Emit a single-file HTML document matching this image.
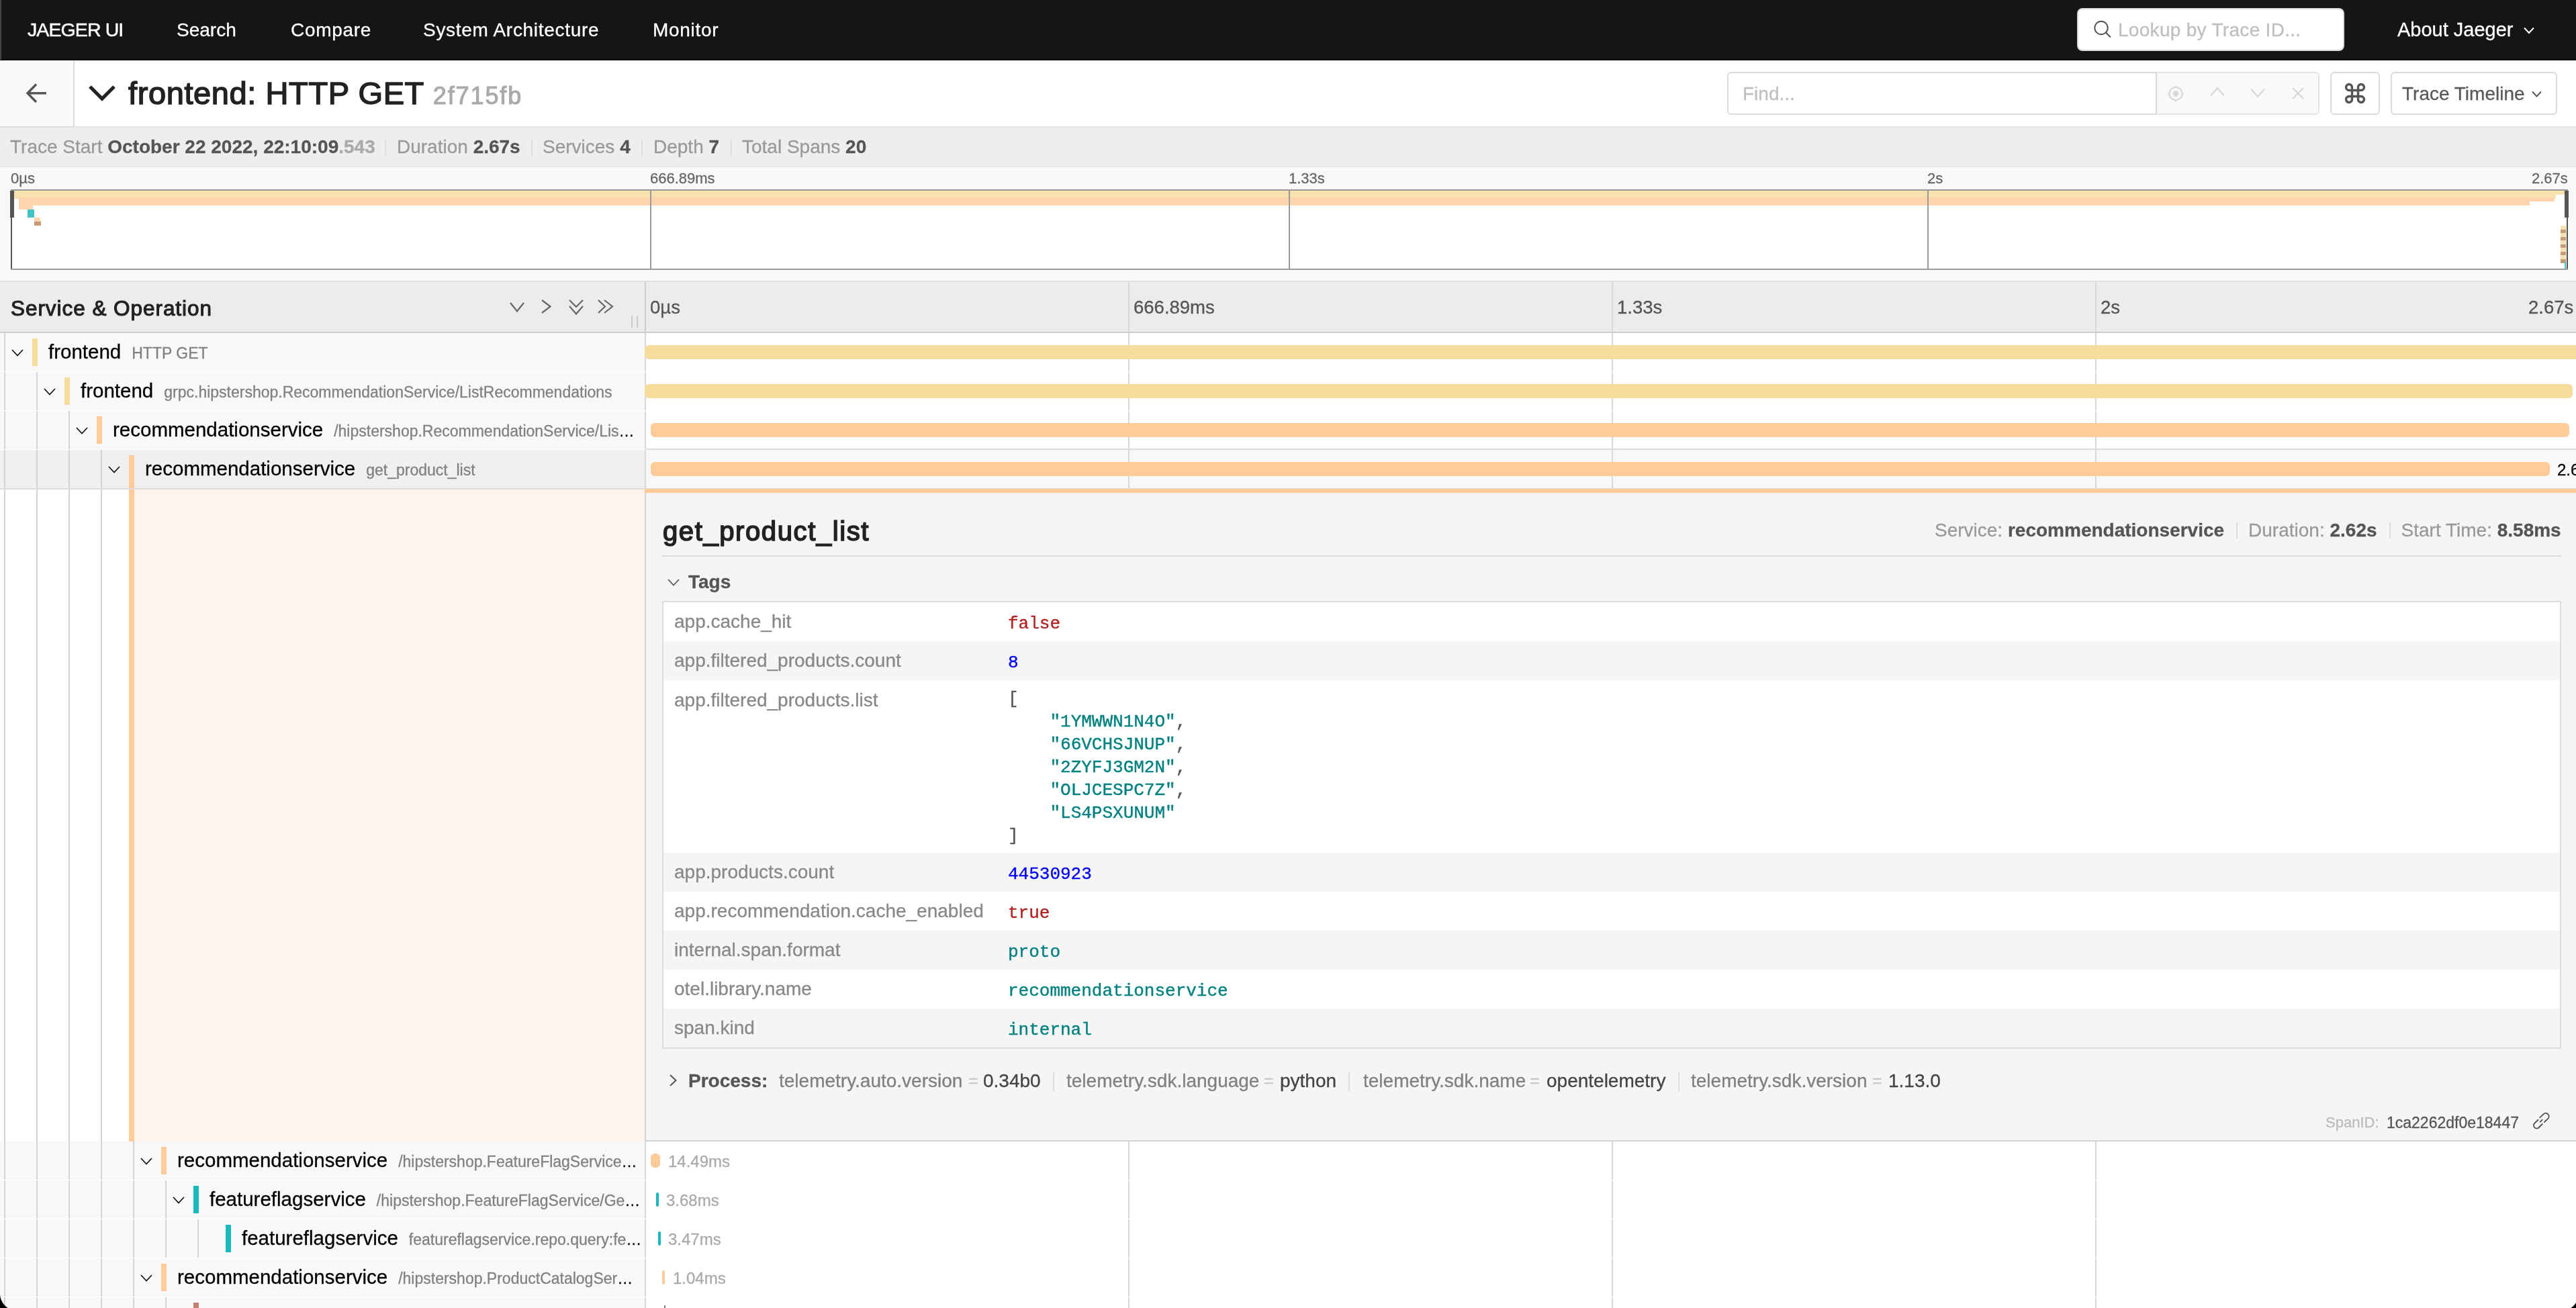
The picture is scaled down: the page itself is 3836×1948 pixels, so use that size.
<!DOCTYPE html>
<html><head><meta charset="utf-8">
<style>
*{box-sizing:border-box}
html,body{margin:0;padding:0;overflow:hidden}
body{width:3840px;height:1948px;position:relative;overflow:hidden;background:#fff;font-family:"Liberation Sans",sans-serif;color:#000}
.a{position:absolute;line-height:1;white-space:nowrap;will-change:transform;-webkit-text-stroke-width:0.3px}
.mono{font-family:"Liberation Mono",monospace}
svg{position:absolute;overflow:visible}
</style></head>
<body>
<div class="a" style="left:0px;top:0px;width:3840px;height:90px;background:#151515;"></div>
<div class="a" style="left:0px;top:88px;width:3840px;height:1px;background:#080808;"></div>
<div class="a" style="left:0px;top:0px;width:2px;height:89px;background:#454545;"></div>
<div class="a" style="left:41px;top:30.3px;font-size:28.5px;color:#fff;font-weight:400;letter-spacing:-0.9px;-webkit-text-stroke:0.5px #fff">JAEGER UI</div>
<div class="a" style="left:263px;top:30.7px;font-size:28px;color:#fff;font-weight:400;-webkit-text-stroke:0.3px #fff">Search</div>
<div class="a" style="left:433px;top:30.7px;font-size:28px;color:#fff;font-weight:400;letter-spacing:0.7px;-webkit-text-stroke:0.3px #fff">Compare</div>
<div class="a" style="left:630px;top:30.7px;font-size:28px;color:#fff;font-weight:400;letter-spacing:0.7px;-webkit-text-stroke:0.3px #fff">System Architecture</div>
<div class="a" style="left:972px;top:30.7px;font-size:28px;color:#fff;font-weight:400;letter-spacing:0.7px;-webkit-text-stroke:0.3px #fff">Monitor</div>
<div class="a" style="left:3093px;top:12px;width:398px;height:64px;background:#fff;border:2px solid #d9d9d9;border-radius:8px"></div>
<svg style="left:3118px;top:31px" width="26" height="26" viewBox="0 0 26 26"><circle cx="11" cy="10.5" r="9.7" fill="none" stroke="#555" stroke-width="2"/><line x1="17.9" y1="17.4" x2="24.2" y2="23.8" stroke="#555" stroke-width="2.2" stroke-linecap="round"/></svg>
<div class="a" style="left:3154px;top:30.5px;font-size:28px;color:#bfbfbf;font-weight:400;letter-spacing:0.3px">Lookup by Trace ID...</div>
<div class="a" style="left:3570px;top:29.7px;font-size:29px;color:#fff;font-weight:400;">About Jaeger</div>
<svg style="left:3758px;top:40px" width="16" height="11" viewBox="0 0 16 11"><polyline points="1,1.5 8,9 15,1.5" fill="none" stroke="#fff" stroke-width="2"/></svg>
<div class="a" style="left:0px;top:90px;width:3840px;height:98px;background:#fff;"></div>
<div class="a" style="left:0px;top:188px;width:3840px;height:2px;background:#e6e6e6;"></div>
<div class="a" style="left:0px;top:90px;width:109px;height:98px;background:#fafafa;"></div>
<div class="a" style="left:109px;top:90px;width:2px;height:100px;background:#ddd;"></div>
<div class="a" style="left:0px;top:188px;width:111px;height:2px;background:#ddd;"></div>
<svg style="left:39px;top:124px" width="32" height="30" viewBox="0 0 32 30"><polyline points="15,1.5 2,14.8 15,28" fill="none" stroke="#555" stroke-width="3.4"/><line x1="2.5" y1="14.8" x2="30" y2="14.8" stroke="#555" stroke-width="3.4"/></svg>
<svg style="left:132px;top:127px" width="40" height="26" viewBox="0 0 40 26"><polyline points="2,2 20,20 38,2" fill="none" stroke="#222" stroke-width="5.2"/></svg>
<div class="a" style="left:191px;top:114.5px;font-size:47px;color:#222;font-weight:400;letter-spacing:0.6px;-webkit-text-stroke:1.5px #222">frontend: HTTP GET <span style="font-size:36px;color:#aaa;letter-spacing:1.9px;-webkit-text-stroke:1.1px #aaa">2f715fb</span></div>
<div class="a" style="left:2572px;top:107px;width:640px;height:64px;background:#fff;border:2px solid #d9d9d9;border-radius:6px 0 0 6px"></div>
<div class="a" style="left:2595px;top:126.3px;font-size:28px;color:#bfbfbf;font-weight:400;">Find...</div>
<div class="a" style="left:3210px;top:107px;width:244px;height:64px;background:#f9f9f9;border:2px solid #e4e4e4;border-left-color:#d9d9d9;border-radius:0 6px 6px 0"></div>
<svg style="left:3228px;top:127px" width="25" height="25" viewBox="0 0 25 25"><circle cx="12" cy="12.5" r="9.6" fill="none" stroke="#d6d6d6" stroke-width="2"/><circle cx="12" cy="12.5" r="4.2" fill="#d6d6d6"/><line x1="12" y1="0.5" x2="12" y2="3" stroke="#d6d6d6" stroke-width="2"/><line x1="12" y1="22" x2="12" y2="24.5" stroke="#d6d6d6" stroke-width="2"/><line x1="0" y1="12.5" x2="2.5" y2="12.5" stroke="#d6d6d6" stroke-width="2"/><line x1="21.5" y1="12.5" x2="24" y2="12.5" stroke="#d6d6d6" stroke-width="2"/></svg>
<svg style="left:3291px;top:129px" width="22" height="15" viewBox="0 0 22 15"><polyline points="1,13.5 11,2 21,13.5" fill="none" stroke="#d6d6d6" stroke-width="2"/></svg>
<svg style="left:3351px;top:131px" width="22" height="15" viewBox="0 0 22 15"><polyline points="1,1.5 11,13 21,1.5" fill="none" stroke="#d6d6d6" stroke-width="2"/></svg>
<svg style="left:3413px;top:130px" width="18" height="18" viewBox="0 0 18 18"><line x1="1" y1="1" x2="17" y2="17" stroke="#d6d6d6" stroke-width="2"/><line x1="17" y1="1" x2="1" y2="17" stroke="#d6d6d6" stroke-width="2"/></svg>
<div class="a" style="left:3470px;top:107px;width:74px;height:64px;background:#fff;border:2px solid #d9d9d9;border-radius:6px"></div>
<svg style="left:3492px;top:124px" width="30" height="30" viewBox="0 0 30 30"><path d="M10.5 10.5 V6.5 A4.5 4.5 0 1 0 6 10.5 H24 A4.5 4.5 0 1 0 19.5 6.5 V23.5 A4.5 4.5 0 1 0 24 19.5 H6 A4.5 4.5 0 1 0 10.5 23.5 Z" fill="none" stroke="#555" stroke-width="3.4"/></svg>
<div class="a" style="left:3560px;top:107px;width:248px;height:64px;background:#fff;border:2px solid #d9d9d9;border-radius:6px"></div>
<div class="a" style="left:3577px;top:125.8px;font-size:28px;color:#595959;font-weight:400;">Trace Timeline</div>
<svg style="left:3770px;top:135px" width="15" height="10" viewBox="0 0 15 10"><polyline points="1,1.5 7.5,8.5 14,1.5" fill="none" stroke="#595959" stroke-width="1.9"/></svg>
<div class="a" style="left:0px;top:190px;width:3840px;height:58px;background:#eee;"></div>
<div class="a" style="left:0px;top:248px;width:3840px;height:1px;background:#e4e4e4;"></div>
<div class="a" style="left:15px;top:205.4px;font-size:28px;color:#000;font-weight:400;"><span style="color:#999">Trace Start </span><span style="color:#555;font-weight:700">October 22 2022, 22:10:09</span><span style="color:#aaa;font-weight:700">.543</span></div>
<div class="a" style="left:591px;top:205.4px;font-size:28px;color:#000;font-weight:400;"><span style="color:#999">Duration </span><span style="color:#555;font-weight:700">2.67s</span></div>
<div class="a" style="left:808px;top:205.4px;font-size:28px;color:#000;font-weight:400;"><span style="color:#999">Services </span><span style="color:#555;font-weight:700">4</span></div>
<div class="a" style="left:973px;top:205.4px;font-size:28px;color:#000;font-weight:400;"><span style="color:#999">Depth </span><span style="color:#555;font-weight:700">7</span></div>
<div class="a" style="left:1105px;top:205.4px;font-size:28px;color:#000;font-weight:400;"><span style="color:#999">Total Spans </span><span style="color:#555;font-weight:700">20</span></div>
<div class="a" style="left:573px;top:208px;width:2px;height:24px;background:#ddd;"></div>
<div class="a" style="left:791px;top:208px;width:2px;height:24px;background:#ddd;"></div>
<div class="a" style="left:955px;top:208px;width:2px;height:24px;background:#ddd;"></div>
<div class="a" style="left:1088px;top:208px;width:2px;height:24px;background:#ddd;"></div>
<div class="a" style="left:0px;top:249px;width:3840px;height:169px;background:#f8f8f8;"></div>
<div class="a" style="left:0px;top:418px;width:3840px;height:2px;background:#e0e0e0;"></div>
<div class="a" style="left:16px;top:282px;width:3808px;height:120px;background:#fff;border:2px solid #999"></div>
<div class="a" style="left:16px;top:255.4px;font-size:22px;color:#666;font-weight:400;">0µs</div>
<div class="a" style="left:968px;top:255.4px;font-size:22px;color:#666;font-weight:400;">666.89ms</div>
<div class="a" style="left:1919px;top:255.4px;font-size:22px;color:#666;font-weight:400;">1.33s</div>
<div class="a" style="left:2870px;top:255.4px;font-size:22px;color:#666;font-weight:400;">2s</div>
<div class="a" style="right:16px;top:255.4px;font-size:22px;color:#666;font-weight:400;">2.67s</div>
<div class="a" style="left:18px;top:284px;width:3801px;height:6px;background:#f8e2b0;"></div>
<div class="a" style="left:18px;top:290px;width:3788px;height:6px;background:#f8e2b0;"></div>
<div class="a" style="left:28px;top:294px;width:3776px;height:6px;background:#ffd5ad;"></div>
<div class="a" style="left:28px;top:300px;width:3739px;height:6px;background:#ffd5ad;"></div>
<div class="a" style="left:28px;top:306px;width:21px;height:6px;background:#ffd5ad;"></div>
<div class="a" style="left:41px;top:312px;width:10px;height:6px;background:#41c3c8;"></div>
<div class="a" style="left:41px;top:318px;width:10px;height:6px;background:#41c3c8;"></div>
<div class="a" style="left:51px;top:324px;width:9px;height:6px;background:#ffd5ad;"></div>
<div class="a" style="left:51px;top:330px;width:10px;height:6px;background:#c69a76;"></div>
<div class="a" style="left:3813px;top:336.0px;width:8px;height:5.5px;background:#f8e2b0;"></div>
<div class="a" style="left:3813px;top:341.5px;width:8px;height:5.5px;background:#c69a76;"></div>
<div class="a" style="left:3813px;top:347.0px;width:8px;height:5.5px;background:#f8e2b0;"></div>
<div class="a" style="left:3813px;top:352.5px;width:8px;height:5.5px;background:#c69a76;"></div>
<div class="a" style="left:3813px;top:358.0px;width:8px;height:5.5px;background:#f8e2b0;"></div>
<div class="a" style="left:3813px;top:363.5px;width:8px;height:5.5px;background:#c69a76;"></div>
<div class="a" style="left:3813px;top:369.0px;width:8px;height:5.5px;background:#f8e2b0;"></div>
<div class="a" style="left:3813px;top:374.5px;width:8px;height:5.5px;background:#c69a76;"></div>
<div class="a" style="left:3813px;top:380.0px;width:8px;height:5.5px;background:#f8e2b0;"></div>
<div class="a" style="left:3813px;top:385.5px;width:8px;height:5.5px;background:#c69a76;"></div>
<div class="a" style="left:3819px;top:390px;width:2px;height:10px;background:#41c3c8;"></div>
<div class="a" style="left:968px;top:284px;width:2px;height:116px;background:#999;"></div>
<div class="a" style="left:1919px;top:284px;width:2px;height:116px;background:#999;"></div>
<div class="a" style="left:2870px;top:284px;width:2px;height:116px;background:#999;"></div>
<div class="a" style="left:16px;top:284px;width:2px;height:116px;background:#555;"></div>
<div class="a" style="left:15px;top:284px;width:6px;height:40px;background:#555;"></div>
<div class="a" style="left:3822px;top:284px;width:2px;height:116px;background:#555;"></div>
<div class="a" style="left:3819px;top:284px;width:6px;height:40px;background:#555;"></div>
<div class="a" style="left:0px;top:420px;width:3840px;height:74px;background:#ececec;"></div>
<div class="a" style="left:0px;top:494px;width:3840px;height:2px;background:#ccc;"></div>
<div class="a" style="left:16px;top:443.5px;font-size:31.5px;color:#222;font-weight:400;letter-spacing:0.95px;-webkit-text-stroke:1.1px #222">Service &amp; Operation</div>
<svg style="left:759px;top:450px" width="22" height="15" viewBox="0 0 22 15"><polyline points="1,1 11,13.5 21,1" fill="none" stroke="#666" stroke-width="2.2"/></svg>
<svg style="left:806px;top:446px" width="15" height="21" viewBox="0 0 15 21"><polyline points="1,1 13.5,10.5 1,20" fill="none" stroke="#666" stroke-width="2.2"/></svg>
<svg style="left:847px;top:446px" width="22" height="23" viewBox="0 0 22 23"><polyline points="1,1 11,11 21,1" fill="none" stroke="#666" stroke-width="2.2"/><polyline points="1,10 11,21.5 21,10" fill="none" stroke="#666" stroke-width="2.2"/></svg>
<svg style="left:890px;top:446px" width="24" height="21" viewBox="0 0 24 21"><polyline points="1,1 11,10.5 1,20" fill="none" stroke="#666" stroke-width="2.2"/><polyline points="10,1 22,10.5 10,20" fill="none" stroke="#666" stroke-width="2.2"/></svg>
<div class="a" style="left:940px;top:470px;width:2px;height:18px;background:#ccc;"></div>
<div class="a" style="left:948px;top:470px;width:2px;height:18px;background:#ccc;"></div>
<div class="a" style="left:960px;top:420px;width:2px;height:74px;background:#ccc;"></div>
<div class="a" style="left:1680px;top:420px;width:2px;height:74px;background:#d8d8d8;"></div>
<div class="a" style="left:2400px;top:420px;width:2px;height:74px;background:#d8d8d8;"></div>
<div class="a" style="left:3120px;top:420px;width:2px;height:74px;background:#d8d8d8;"></div>
<div class="a" style="left:968px;top:444.4px;font-size:27.5px;color:#555;font-weight:400;">0µs</div>
<div class="a" style="left:1688px;top:444.4px;font-size:27.5px;color:#555;font-weight:400;">666.89ms</div>
<div class="a" style="left:2408px;top:444.4px;font-size:27.5px;color:#555;font-weight:400;">1.33s</div>
<div class="a" style="left:3128px;top:444.4px;font-size:27.5px;color:#555;font-weight:400;">2s</div>
<div class="a" style="right:8px;top:444.4px;font-size:27.5px;color:#555;font-weight:400;">2.67s</div>
<div class="a" style="left:0px;top:496px;width:960px;height:57px;background:#f8f8f8;"></div>
<div class="a" style="left:962px;top:496px;width:2878px;height:57px;background:#fff;"></div>
<div class="a" style="left:0px;top:553px;width:3840px;height:1px;background:#fff;"></div>
<div class="a" style="left:6px;top:496px;width:2px;height:57px;background:#d3d3d3;"></div>
<svg style="left:17px;top:519.8px" width="18" height="11" viewBox="0 0 18 11"><polyline points="1,1 9,9.5 17,1" fill="none" stroke="#111" stroke-width="1.7"/></svg>
<div class="a" style="left:48px;top:504px;width:8px;height:40.5px;background:#f7dc9d;"></div>
<div class="a" style="left:72px;top:508.9px;width:888px;overflow:hidden;font-size:29.5px;line-height:29.5px;height:36px;color:#000"><span>frontend</span><span style="font-size:23px;color:#808080;margin-left:16px">HTTP GET</span></div>
<div class="a" style="left:960px;top:496px;width:2px;height:57px;background:#d8d8d8;"></div>
<div class="a" style="left:1680px;top:496px;width:2px;height:57px;background:#d8d8d8;"></div>
<div class="a" style="left:2400px;top:496px;width:2px;height:57px;background:#d8d8d8;"></div>
<div class="a" style="left:3120px;top:496px;width:2px;height:57px;background:#d8d8d8;"></div>
<div class="a" style="left:960px;top:514px;width:2886px;height:21px;background:#f7dc9d;border-radius:6px"></div>
<div class="a" style="left:0px;top:554px;width:960px;height:57px;background:#f8f8f8;"></div>
<div class="a" style="left:962px;top:554px;width:2878px;height:57px;background:#fff;"></div>
<div class="a" style="left:0px;top:611px;width:3840px;height:1px;background:#fff;"></div>
<div class="a" style="left:6px;top:554px;width:2px;height:57px;background:#d3d3d3;"></div>
<div class="a" style="left:54px;top:554px;width:2px;height:57px;background:#d3d3d3;"></div>
<svg style="left:65px;top:577.8px" width="18" height="11" viewBox="0 0 18 11"><polyline points="1,1 9,9.5 17,1" fill="none" stroke="#111" stroke-width="1.7"/></svg>
<div class="a" style="left:96px;top:562px;width:8px;height:40.5px;background:#f7dc9d;"></div>
<div class="a" style="left:120px;top:566.9px;width:840px;overflow:hidden;font-size:29.5px;line-height:29.5px;height:36px;color:#000"><span>frontend</span><span style="font-size:23px;color:#808080;margin-left:16px">grpc.hipstershop.RecommendationService/ListRecommendations</span></div>
<div class="a" style="left:960px;top:554px;width:2px;height:57px;background:#d8d8d8;"></div>
<div class="a" style="left:1680px;top:554px;width:2px;height:57px;background:#d8d8d8;"></div>
<div class="a" style="left:2400px;top:554px;width:2px;height:57px;background:#d8d8d8;"></div>
<div class="a" style="left:3120px;top:554px;width:2px;height:57px;background:#d8d8d8;"></div>
<div class="a" style="left:960px;top:572px;width:2871px;height:21px;background:#f7dc9d;border-radius:6px"></div>
<div class="a" style="left:0px;top:612px;width:960px;height:57px;background:#f8f8f8;"></div>
<div class="a" style="left:962px;top:612px;width:2878px;height:57px;background:#fff;"></div>
<div class="a" style="left:0px;top:669px;width:3840px;height:1px;background:#fff;"></div>
<div class="a" style="left:6px;top:612px;width:2px;height:57px;background:#d3d3d3;"></div>
<div class="a" style="left:54px;top:612px;width:2px;height:57px;background:#d3d3d3;"></div>
<div class="a" style="left:102px;top:612px;width:2px;height:57px;background:#d3d3d3;"></div>
<svg style="left:113px;top:635.8px" width="18" height="11" viewBox="0 0 18 11"><polyline points="1,1 9,9.5 17,1" fill="none" stroke="#111" stroke-width="1.7"/></svg>
<div class="a" style="left:144px;top:620px;width:8px;height:40.5px;background:#fecb99;"></div>
<div class="a" style="left:168px;top:624.9px;width:792px;overflow:hidden;font-size:29.5px;line-height:29.5px;height:36px;color:#000"><span>recommendationservice</span><span style="font-size:23px;color:#808080;margin-left:16px">/hipstershop.RecommendationService/Lis</span><span style="font-size:23px;color:#000;letter-spacing:1px">…</span></div>
<div class="a" style="left:960px;top:612px;width:2px;height:57px;background:#d8d8d8;"></div>
<div class="a" style="left:1680px;top:612px;width:2px;height:57px;background:#d8d8d8;"></div>
<div class="a" style="left:2400px;top:612px;width:2px;height:57px;background:#d8d8d8;"></div>
<div class="a" style="left:3120px;top:612px;width:2px;height:57px;background:#d8d8d8;"></div>
<div class="a" style="left:969px;top:630px;width:2857px;height:21px;background:#fecb99;border-radius:6px"></div>
<div class="a" style="left:0px;top:670px;width:960px;height:57px;background:#f0f0f0;"></div>
<div class="a" style="left:962px;top:670px;width:2878px;height:57px;background:#f8f8f8;"></div>
<div class="a" style="left:0px;top:727px;width:3840px;height:1px;background:#fff;"></div>
<div class="a" style="left:6px;top:670px;width:2px;height:57px;background:#d3d3d3;"></div>
<div class="a" style="left:54px;top:670px;width:2px;height:57px;background:#d3d3d3;"></div>
<div class="a" style="left:102px;top:670px;width:2px;height:57px;background:#d3d3d3;"></div>
<div class="a" style="left:150px;top:670px;width:2px;height:57px;background:#d3d3d3;"></div>
<svg style="left:161px;top:693.8px" width="18" height="11" viewBox="0 0 18 11"><polyline points="1,1 9,9.5 17,1" fill="none" stroke="#111" stroke-width="1.7"/></svg>
<div class="a" style="left:192px;top:678px;width:8px;height:50px;background:#fecb99;"></div>
<div class="a" style="left:962px;top:668px;width:2878px;height:2px;background:#ddd;"></div>
<div class="a" style="left:216px;top:682.9px;width:744px;overflow:hidden;font-size:29.5px;line-height:29.5px;height:36px;color:#000"><span>recommendationservice</span><span style="font-size:23px;color:#808080;margin-left:16px">get_product_list</span></div>
<div class="a" style="left:960px;top:670px;width:2px;height:57px;background:#d8d8d8;"></div>
<div class="a" style="left:1680px;top:670px;width:2px;height:57px;background:#d8d8d8;"></div>
<div class="a" style="left:2400px;top:670px;width:2px;height:57px;background:#d8d8d8;"></div>
<div class="a" style="left:3120px;top:670px;width:2px;height:57px;background:#d8d8d8;"></div>
<div class="a" style="left:969px;top:688px;width:2828px;height:21px;background:#fecb99;border-radius:6px"></div>
<div class="a" style="left:3808px;top:688.2px;font-size:24px;color:#000;font-weight:400;">2.62s</div>
<div class="a" style="left:0px;top:727px;width:3840px;height:2px;background:#ddd;"></div>
<div class="a" style="left:0px;top:729px;width:960px;height:971px;background:#fff;"></div>
<div class="a" style="left:6px;top:729px;width:2px;height:971px;background:#d3d3d3;"></div>
<div class="a" style="left:54px;top:729px;width:2px;height:971px;background:#d3d3d3;"></div>
<div class="a" style="left:102px;top:729px;width:2px;height:971px;background:#d3d3d3;"></div>
<div class="a" style="left:150px;top:729px;width:2px;height:971px;background:#d3d3d3;"></div>
<div class="a" style="left:192px;top:729px;width:8px;height:971px;background:#fecb99;"></div>
<div class="a" style="left:200px;top:729px;width:760px;height:971px;background:#fdf4eb;"></div>
<div class="a" style="left:960px;top:728px;width:2880px;height:972px;background:#f5f5f5;border-left:2px solid #d3d3d3;border-bottom:2px solid #d3d3d3"></div>
<div class="a" style="left:960px;top:728px;width:2880px;height:6px;background:#fecb99;"></div>
<div class="a" style="left:987px;top:771.0px;font-size:40px;color:#222;font-weight:400;letter-spacing:1.6px;-webkit-text-stroke:1.6px #222">get_product_list</div>
<div class="a" style="right:26px;top:776.3px;font-size:28px;color:#000;font-weight:400;"><span style="color:#999">Service: </span><span style="color:#555;font-weight:700">recommendationservice</span><span style="display:inline-block;width:2px;height:24px;background:#ddd;margin:0 16px 0 18px;vertical-align:-3px"></span><span style="color:#999">Duration: </span><span style="color:#555;font-weight:700">2.62s</span><span style="display:inline-block;width:2px;height:24px;background:#ddd;margin:0 16px 0 18px;vertical-align:-3px"></span><span style="color:#999">Start Time: </span><span style="color:#555;font-weight:700">8.58ms</span></div>
<div class="a" style="left:986px;top:827px;width:2828px;height:2px;background:#ddd;"></div>
<svg style="left:994px;top:862px" width="18" height="11" viewBox="0 0 18 11"><polyline points="1,1 9,9.5 17,1" fill="none" stroke="#555" stroke-width="1.7"/></svg>
<div class="a" style="left:1025px;top:853.0px;font-size:28px;color:#555;font-weight:700;">Tags</div>
<div class="a" style="left:986px;top:895px;width:2828px;height:667px;background:#fff;border:2px solid #ddd"></div>
<div class="a" style="left:1004px;top:911.8px;font-size:28px;color:#888;font-weight:400;">app.cache_hit</div>
<div class="a mono" style="left:1501px;top:915.9px;font-size:26px;color:#000;font-weight:400;-webkit-text-stroke:0.4px currentColor"><span style="color:#b22222">false</span></div>
<div class="a" style="left:988px;top:955px;width:2824px;height:58px;background:#f5f5f5;"></div>
<div class="a" style="left:1004px;top:969.8px;font-size:28px;color:#888;font-weight:400;">app.filtered_products.count</div>
<div class="a mono" style="left:1501px;top:973.9px;font-size:26px;color:#000;font-weight:400;-webkit-text-stroke:0.4px currentColor"><span style="color:#0000ff">8</span></div>
<div class="a" style="left:1004px;top:1028.7px;font-size:28px;color:#888;font-weight:400;">app.filtered_products.list</div>
<div class="a" style="left:988px;top:1270px;width:2824px;height:58px;background:#f5f5f5;"></div>
<div class="a" style="left:1004px;top:1284.8px;font-size:28px;color:#888;font-weight:400;">app.products.count</div>
<div class="a mono" style="left:1501px;top:1288.9px;font-size:26px;color:#000;font-weight:400;-webkit-text-stroke:0.4px currentColor"><span style="color:#0000ff">44530923</span></div>
<div class="a" style="left:1004px;top:1342.8px;font-size:28px;color:#888;font-weight:400;">app.recommendation.cache_enabled</div>
<div class="a mono" style="left:1501px;top:1346.9px;font-size:26px;color:#000;font-weight:400;-webkit-text-stroke:0.4px currentColor"><span style="color:#b22222">true</span></div>
<div class="a" style="left:988px;top:1386px;width:2824px;height:58px;background:#f5f5f5;"></div>
<div class="a" style="left:1004px;top:1400.8px;font-size:28px;color:#888;font-weight:400;">internal.span.format</div>
<div class="a mono" style="left:1501px;top:1404.9px;font-size:26px;color:#000;font-weight:400;-webkit-text-stroke:0.4px currentColor"><span style="color:#008080">proto</span></div>
<div class="a" style="left:1004px;top:1458.8px;font-size:28px;color:#888;font-weight:400;">otel.library.name</div>
<div class="a mono" style="left:1501px;top:1462.9px;font-size:26px;color:#000;font-weight:400;-webkit-text-stroke:0.4px currentColor"><span style="color:#008080">recommendationservice</span></div>
<div class="a" style="left:988px;top:1502px;width:2824px;height:58px;background:#f5f5f5;"></div>
<div class="a" style="left:1004px;top:1516.8px;font-size:28px;color:#888;font-weight:400;">span.kind</div>
<div class="a mono" style="left:1501px;top:1520.9px;font-size:26px;color:#000;font-weight:400;-webkit-text-stroke:0.4px currentColor"><span style="color:#008080">internal</span></div>
<div class="a mono" style="left:1501px;top:1027.6px;font-size:26px;color:#000;font-weight:400;white-space:pre;-webkit-text-stroke:0.4px currentColor"><span style="color:#555">[</span></div>
<div class="a mono" style="left:1501px;top:1061.6px;font-size:26px;color:#000;font-weight:400;white-space:pre;-webkit-text-stroke:0.4px currentColor">    <span style="color:#008080">"1YMWWN1N4O"</span><span style="color:#555">,</span></div>
<div class="a mono" style="left:1501px;top:1095.6px;font-size:26px;color:#000;font-weight:400;white-space:pre;-webkit-text-stroke:0.4px currentColor">    <span style="color:#008080">"66VCHSJNUP"</span><span style="color:#555">,</span></div>
<div class="a mono" style="left:1501px;top:1129.6px;font-size:26px;color:#000;font-weight:400;white-space:pre;-webkit-text-stroke:0.4px currentColor">    <span style="color:#008080">"2ZYFJ3GM2N"</span><span style="color:#555">,</span></div>
<div class="a mono" style="left:1501px;top:1163.6px;font-size:26px;color:#000;font-weight:400;white-space:pre;-webkit-text-stroke:0.4px currentColor">    <span style="color:#008080">"OLJCESPC7Z"</span><span style="color:#555">,</span></div>
<div class="a mono" style="left:1501px;top:1197.6px;font-size:26px;color:#000;font-weight:400;white-space:pre;-webkit-text-stroke:0.4px currentColor">    <span style="color:#008080">"LS4PSXUNUM"</span></div>
<div class="a mono" style="left:1501px;top:1231.6px;font-size:26px;color:#000;font-weight:400;white-space:pre;-webkit-text-stroke:0.4px currentColor"><span style="color:#555">]</span></div>
<svg style="left:997px;top:1600px" width="11" height="18" viewBox="0 0 11 18"><polyline points="1,1 9.5,9 1,17" fill="none" stroke="#555" stroke-width="2"/></svg>
<div class="a" style="left:1025px;top:1596.1px;font-size:28px;color:#555;font-weight:700;">Process:</div>
<div class="a" style="left:1160px;top:1596.1px;font-size:28px;color:#808080;font-weight:400;">telemetry.auto.version</div>
<div class="a" style="left:1442px;top:1597.3px;font-size:25px;color:#c8c8c8;font-weight:400;">=</div>
<div class="a" style="left:1464px;top:1596.1px;font-size:28px;color:#444;font-weight:400;">0.34b0</div>
<div class="a" style="left:1588px;top:1596.1px;font-size:28px;color:#808080;font-weight:400;">telemetry.sdk.language</div>
<div class="a" style="left:1882px;top:1597.3px;font-size:25px;color:#c8c8c8;font-weight:400;">=</div>
<div class="a" style="left:1906px;top:1596.1px;font-size:28px;color:#444;font-weight:400;">python</div>
<div class="a" style="left:2030px;top:1596.1px;font-size:28px;color:#808080;font-weight:400;">telemetry.sdk.name</div>
<div class="a" style="left:2278px;top:1597.3px;font-size:25px;color:#c8c8c8;font-weight:400;">=</div>
<div class="a" style="left:2303px;top:1596.1px;font-size:28px;color:#444;font-weight:400;">opentelemetry</div>
<div class="a" style="left:2518px;top:1596.1px;font-size:28px;color:#808080;font-weight:400;">telemetry.sdk.version</div>
<div class="a" style="left:2788px;top:1597.3px;font-size:25px;color:#c8c8c8;font-weight:400;">=</div>
<div class="a" style="left:2812px;top:1596.1px;font-size:28px;color:#444;font-weight:400;">1.13.0</div>
<div class="a" style="left:1568px;top:1597px;width:2px;height:28px;background:#ddd;"></div>
<div class="a" style="left:2008px;top:1597px;width:2px;height:28px;background:#ddd;"></div>
<div class="a" style="left:2499px;top:1597px;width:2px;height:28px;background:#ddd;"></div>
<div class="a" style="left:3463px;top:1661.4px;font-size:22px;color:#bbb;font-weight:400;">SpanID:</div>
<div class="a" style="left:3554px;top:1660.5px;font-size:23px;color:#555;font-weight:400;">1ca2262df0e18447</div>
<svg style="left:3772px;top:1657px" width="25" height="25" viewBox="0 0 25 25"><g fill="none" stroke="#555" stroke-width="1.9" stroke-linecap="round"><path d="M10.2 7.4 L15.2 2.6 A4.7 4.7 0 0 1 22.6 8.6 L17 14"/><path d="M13.5 10.8 L10.6 13.8"/><path d="M7.6 10.8 L2.2 16 A4.5 4.5 0 0 0 8.4 22.5 L13.8 17"/></g></svg>
<div class="a" style="left:0px;top:1700px;width:960px;height:57px;background:#f8f8f8;"></div>
<div class="a" style="left:962px;top:1700px;width:2878px;height:57px;background:#fff;"></div>
<div class="a" style="left:0px;top:1757px;width:3840px;height:1px;background:#fff;"></div>
<div class="a" style="left:6px;top:1700px;width:2px;height:57px;background:#d3d3d3;"></div>
<div class="a" style="left:54px;top:1700px;width:2px;height:57px;background:#d3d3d3;"></div>
<div class="a" style="left:102px;top:1700px;width:2px;height:57px;background:#d3d3d3;"></div>
<div class="a" style="left:150px;top:1700px;width:2px;height:57px;background:#d3d3d3;"></div>
<div class="a" style="left:198px;top:1700px;width:2px;height:57px;background:#d3d3d3;"></div>
<svg style="left:209px;top:1723.8px" width="18" height="11" viewBox="0 0 18 11"><polyline points="1,1 9,9.5 17,1" fill="none" stroke="#111" stroke-width="1.7"/></svg>
<div class="a" style="left:240px;top:1708px;width:8px;height:40.5px;background:#fecb99;"></div>
<div class="a" style="left:264px;top:1712.9px;width:696px;overflow:hidden;font-size:29.5px;line-height:29.5px;height:36px;color:#000"><span>recommendationservice</span><span style="font-size:23px;color:#808080;margin-left:16px">/hipstershop.FeatureFlagService</span><span style="font-size:23px;color:#000;letter-spacing:1px">…</span></div>
<div class="a" style="left:960px;top:1700px;width:2px;height:57px;background:#d8d8d8;"></div>
<div class="a" style="left:1680px;top:1700px;width:2px;height:57px;background:#d8d8d8;"></div>
<div class="a" style="left:2400px;top:1700px;width:2px;height:57px;background:#d8d8d8;"></div>
<div class="a" style="left:3120px;top:1700px;width:2px;height:57px;background:#d8d8d8;"></div>
<div class="a" style="left:969px;top:1718px;width:14px;height:21px;background:#fecb99;border-radius:6px"></div>
<div class="a" style="left:995px;top:1718.2px;font-size:24px;color:#aaa;font-weight:400;">14.49ms</div>
<div class="a" style="left:0px;top:1758px;width:960px;height:57px;background:#f8f8f8;"></div>
<div class="a" style="left:962px;top:1758px;width:2878px;height:57px;background:#fff;"></div>
<div class="a" style="left:0px;top:1815px;width:3840px;height:1px;background:#fff;"></div>
<div class="a" style="left:6px;top:1758px;width:2px;height:57px;background:#d3d3d3;"></div>
<div class="a" style="left:54px;top:1758px;width:2px;height:57px;background:#d3d3d3;"></div>
<div class="a" style="left:102px;top:1758px;width:2px;height:57px;background:#d3d3d3;"></div>
<div class="a" style="left:150px;top:1758px;width:2px;height:57px;background:#d3d3d3;"></div>
<div class="a" style="left:198px;top:1758px;width:2px;height:57px;background:#d3d3d3;"></div>
<div class="a" style="left:246px;top:1758px;width:2px;height:57px;background:#d3d3d3;"></div>
<svg style="left:257px;top:1781.8px" width="18" height="11" viewBox="0 0 18 11"><polyline points="1,1 9,9.5 17,1" fill="none" stroke="#111" stroke-width="1.7"/></svg>
<div class="a" style="left:288px;top:1766px;width:8px;height:40.5px;background:#17b8be;"></div>
<div class="a" style="left:312px;top:1770.9px;width:648px;overflow:hidden;font-size:29.5px;line-height:29.5px;height:36px;color:#000"><span>featureflagservice</span><span style="font-size:23px;color:#808080;margin-left:16px">/hipstershop.FeatureFlagService/Ge</span><span style="font-size:23px;color:#000;letter-spacing:1px">…</span></div>
<div class="a" style="left:960px;top:1758px;width:2px;height:57px;background:#d8d8d8;"></div>
<div class="a" style="left:1680px;top:1758px;width:2px;height:57px;background:#d8d8d8;"></div>
<div class="a" style="left:2400px;top:1758px;width:2px;height:57px;background:#d8d8d8;"></div>
<div class="a" style="left:3120px;top:1758px;width:2px;height:57px;background:#d8d8d8;"></div>
<div class="a" style="left:977px;top:1776px;width:4px;height:21px;background:#17b8be;border-radius:6px"></div>
<div class="a" style="left:992px;top:1776.2px;font-size:24px;color:#aaa;font-weight:400;">3.68ms</div>
<div class="a" style="left:0px;top:1816px;width:960px;height:57px;background:#f8f8f8;"></div>
<div class="a" style="left:962px;top:1816px;width:2878px;height:57px;background:#fff;"></div>
<div class="a" style="left:0px;top:1873px;width:3840px;height:1px;background:#fff;"></div>
<div class="a" style="left:6px;top:1816px;width:2px;height:57px;background:#d3d3d3;"></div>
<div class="a" style="left:54px;top:1816px;width:2px;height:57px;background:#d3d3d3;"></div>
<div class="a" style="left:102px;top:1816px;width:2px;height:57px;background:#d3d3d3;"></div>
<div class="a" style="left:150px;top:1816px;width:2px;height:57px;background:#d3d3d3;"></div>
<div class="a" style="left:198px;top:1816px;width:2px;height:57px;background:#d3d3d3;"></div>
<div class="a" style="left:246px;top:1816px;width:2px;height:57px;background:#d3d3d3;"></div>
<div class="a" style="left:294px;top:1816px;width:2px;height:57px;background:#d3d3d3;"></div>
<div class="a" style="left:336px;top:1824px;width:8px;height:40.5px;background:#17b8be;"></div>
<div class="a" style="left:360px;top:1828.9px;width:600px;overflow:hidden;font-size:29.5px;line-height:29.5px;height:36px;color:#000"><span>featureflagservice</span><span style="font-size:23px;color:#808080;margin-left:16px">featureflagservice.repo.query:fe</span><span style="font-size:23px;color:#000;letter-spacing:1px">…</span></div>
<div class="a" style="left:960px;top:1816px;width:2px;height:57px;background:#d8d8d8;"></div>
<div class="a" style="left:1680px;top:1816px;width:2px;height:57px;background:#d8d8d8;"></div>
<div class="a" style="left:2400px;top:1816px;width:2px;height:57px;background:#d8d8d8;"></div>
<div class="a" style="left:3120px;top:1816px;width:2px;height:57px;background:#d8d8d8;"></div>
<div class="a" style="left:980px;top:1834px;width:4px;height:21px;background:#17b8be;border-radius:6px"></div>
<div class="a" style="left:995px;top:1834.2px;font-size:24px;color:#aaa;font-weight:400;">3.47ms</div>
<div class="a" style="left:0px;top:1874px;width:960px;height:57px;background:#f8f8f8;"></div>
<div class="a" style="left:962px;top:1874px;width:2878px;height:57px;background:#fff;"></div>
<div class="a" style="left:0px;top:1931px;width:3840px;height:1px;background:#fff;"></div>
<div class="a" style="left:6px;top:1874px;width:2px;height:57px;background:#d3d3d3;"></div>
<div class="a" style="left:54px;top:1874px;width:2px;height:57px;background:#d3d3d3;"></div>
<div class="a" style="left:102px;top:1874px;width:2px;height:57px;background:#d3d3d3;"></div>
<div class="a" style="left:150px;top:1874px;width:2px;height:57px;background:#d3d3d3;"></div>
<div class="a" style="left:198px;top:1874px;width:2px;height:57px;background:#d3d3d3;"></div>
<svg style="left:209px;top:1897.8px" width="18" height="11" viewBox="0 0 18 11"><polyline points="1,1 9,9.5 17,1" fill="none" stroke="#111" stroke-width="1.7"/></svg>
<div class="a" style="left:240px;top:1882px;width:8px;height:40.5px;background:#fecb99;"></div>
<div class="a" style="left:264px;top:1886.9px;width:696px;overflow:hidden;font-size:29.5px;line-height:29.5px;height:36px;color:#000"><span>recommendationservice</span><span style="font-size:23px;color:#808080;margin-left:16px">/hipstershop.ProductCatalogSer</span><span style="font-size:23px;color:#000;letter-spacing:1px">…</span></div>
<div class="a" style="left:960px;top:1874px;width:2px;height:57px;background:#d8d8d8;"></div>
<div class="a" style="left:1680px;top:1874px;width:2px;height:57px;background:#d8d8d8;"></div>
<div class="a" style="left:2400px;top:1874px;width:2px;height:57px;background:#d8d8d8;"></div>
<div class="a" style="left:3120px;top:1874px;width:2px;height:57px;background:#d8d8d8;"></div>
<div class="a" style="left:986px;top:1892px;width:4px;height:21px;background:#fecb99;border-radius:6px"></div>
<div class="a" style="left:1002px;top:1892.2px;font-size:24px;color:#aaa;font-weight:400;">1.04ms</div>
<div class="a" style="left:0px;top:1932px;width:960px;height:57px;background:#f8f8f8;"></div>
<div class="a" style="left:962px;top:1932px;width:2878px;height:57px;background:#fff;"></div>
<div class="a" style="left:0px;top:1989px;width:3840px;height:1px;background:#fff;"></div>
<div class="a" style="left:6px;top:1932px;width:2px;height:57px;background:#d3d3d3;"></div>
<div class="a" style="left:54px;top:1932px;width:2px;height:57px;background:#d3d3d3;"></div>
<div class="a" style="left:102px;top:1932px;width:2px;height:57px;background:#d3d3d3;"></div>
<div class="a" style="left:150px;top:1932px;width:2px;height:57px;background:#d3d3d3;"></div>
<div class="a" style="left:198px;top:1932px;width:2px;height:57px;background:#d3d3d3;"></div>
<div class="a" style="left:246px;top:1932px;width:2px;height:57px;background:#d3d3d3;"></div>
<svg style="left:257px;top:1955.8px" width="18" height="11" viewBox="0 0 18 11"><polyline points="1,1 9,9.5 17,1" fill="none" stroke="#111" stroke-width="1.7"/></svg>
<div class="a" style="left:288px;top:1940px;width:8px;height:40.5px;background:#c4806a;"></div>
<div class="a" style="left:312px;top:1944.9px;width:648px;overflow:hidden;font-size:29.5px;line-height:29.5px;height:36px;color:#000"><span></span><span style="font-size:23px;color:#808080;margin-left:16px"></span></div>
<div class="a" style="left:960px;top:1932px;width:2px;height:57px;background:#d8d8d8;"></div>
<div class="a" style="left:1680px;top:1932px;width:2px;height:57px;background:#d8d8d8;"></div>
<div class="a" style="left:2400px;top:1932px;width:2px;height:57px;background:#d8d8d8;"></div>
<div class="a" style="left:3120px;top:1932px;width:2px;height:57px;background:#d8d8d8;"></div>
<div class="a" style="left:989px;top:1943.5px;width:2px;height:10px;background:rgba(0,0,0,0.5);"></div>
<div class="a" style="left:0;top:1926px;width:30px;height:22px;background:radial-gradient(circle at 26.3px 0px, rgba(0,0,0,0) 25.8px, #000 27px)"></div>
<div class="a" style="left:3810px;top:1926px;width:30px;height:22px;background:radial-gradient(circle at 3.7px 0px, rgba(0,0,0,0) 25.8px, #000 27px)"></div>
</body></html>
